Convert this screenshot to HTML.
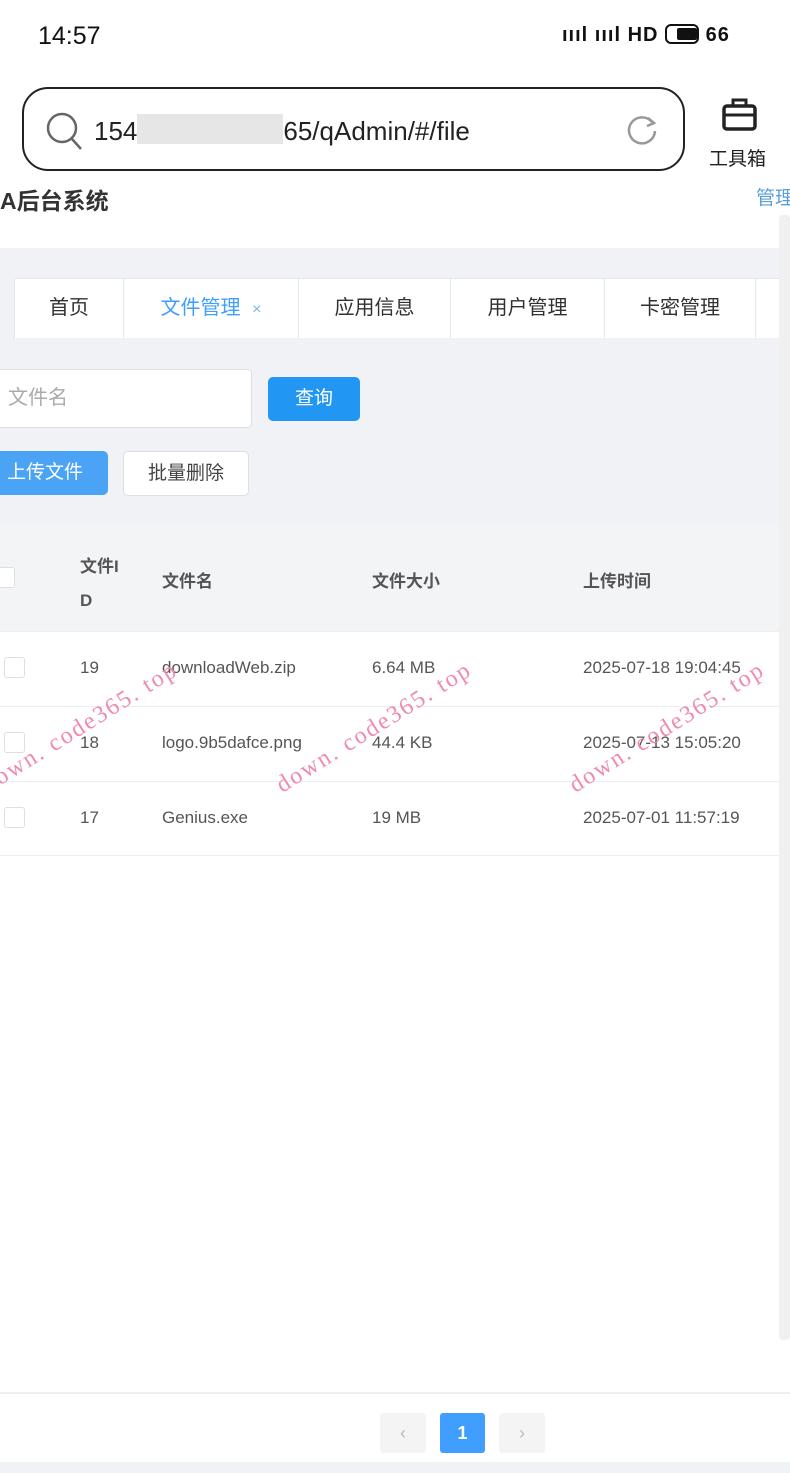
<!DOCTYPE html>
<html><head><meta charset="utf-8"><style>
*{margin:0;padding:0;box-sizing:border-box}
body{width:790px;height:1473px;position:relative;background:#fff;font-family:"Liberation Sans","Noto Sans CJK SC",sans-serif;overflow:hidden;color:#333}
.a{position:absolute}
.tab{position:absolute;top:278px;height:60px;background:#fff;border:1px solid #e4e7ed;border-bottom:none;font-size:20px;line-height:58px;text-align:center;color:#303133}
.th{position:absolute;font-size:17px;font-weight:bold;color:#555}
.td{position:absolute;font-size:17px;color:#555}
.cb{position:absolute;left:4px;width:21px;height:21px;border:1px solid #dcdfe6;border-radius:3px;background:#fff}
.wm{position:absolute;color:#f08ab0;font-family:"Liberation Serif",serif;font-size:24px;transform:rotate(-32deg);transform-origin:left bottom;letter-spacing:2px;white-space:nowrap}
</style></head><body>
<div class="a" style="left:38px;top:22px;font-size:25px;color:#111">14:57</div>
<div class="a" style="left:562px;top:24px;font-size:20px;font-weight:bold;color:#111;letter-spacing:1px;white-space:nowrap">ıııl ıııl HD <span style="display:inline-block;width:34px;height:20px;border:2px solid #111;border-radius:6px;vertical-align:-3px;padding:2px"><span style="display:block;width:20px;height:12px;background:#111;border-radius:2px;margin-left:8px"></span></span> 66</div>
<div class="a" style="left:22px;top:87px;width:663px;height:84px;border:2.5px solid #222;border-radius:26px"></div>
<svg class="a" style="left:44px;top:110px" width="40" height="42"><circle cx="18" cy="18" r="14" fill="none" stroke="#666" stroke-width="2.5"/><line x1="28" y1="29" x2="37" y2="39" stroke="#666" stroke-width="2.5"/></svg>
<div class="a" style="left:94px;top:114px;font-size:26px;color:#222;white-space:nowrap">154<span style="display:inline-block;width:146px;height:30px;background:#e6e6e6;vertical-align:-4px"></span>65/qAdmin/#/file</div>
<svg class="a" style="left:624px;top:112px" width="36" height="36"><path d="M28 10 A13 13 0 1 0 31 19" fill="none" stroke="#999" stroke-width="2.5"/><path d="M24 6 L30 11 L23 14" fill="none" stroke="#999" stroke-width="2.5"/></svg>
<svg class="a" style="left:721px;top:96px" width="38" height="38"><rect x="3" y="10" width="31" height="23" rx="3" fill="none" stroke="#222" stroke-width="3.5"/><path d="M12 10 V4 H25 V10" fill="none" stroke="#222" stroke-width="3"/><line x1="3" y1="19" x2="34" y2="19" stroke="#222" stroke-width="3"/></svg>
<div class="a" style="left:709px;top:144px;font-size:19px;color:#222;white-space:nowrap">工具箱</div>
<div class="a" style="left:0;top:182px;font-size:23px;font-weight:bold;color:#333;white-space:nowrap">A后台系统</div>
<div class="a" style="left:756px;top:183px;font-size:19px;color:#5aa0d8;white-space:nowrap">管理</div>
<div class="a" style="left:0;top:248px;width:790px;height:277px;background:#f0f2f5"></div>
<div class="tab" style="left:14px;width:110px">首页</div>
<div class="tab" style="left:123px;width:176px;color:#409eff">文件管理 <span style="font-size:16px;color:#7ab4ec;margin-left:6px">×</span></div>
<div class="tab" style="left:298px;width:153px">应用信息</div>
<div class="tab" style="left:450px;width:155px">用户管理</div>
<div class="tab" style="left:604px;width:152px">卡密管理</div>
<div class="tab" style="left:755px;width:60px"></div>
<div class="a" style="left:-5px;top:369px;width:257px;height:59px;background:#fff;border:1px solid #dcdfe6;border-radius:4px;font-size:20px;color:#aaa;line-height:57px;padding-left:12px">文件名</div>
<div class="a" style="left:268px;top:377px;width:92px;height:44px;background:#2196f3;border-radius:5px;color:#fff;font-size:19px;text-align:center;line-height:44px">查询</div>
<div class="a" style="left:-5px;top:451px;width:113px;height:44px;background:#4aa3f5;border-radius:5px;color:#fff;font-size:19px;line-height:44px;padding-left:12px">上传文件</div>
<div class="a" style="left:123px;top:451px;width:126px;height:45px;background:#fff;border:1px solid #dcdfe6;border-radius:5px;font-size:19px;text-align:center;line-height:43px;color:#444">批量删除</div>
<div class="a" style="left:0;top:525px;width:790px;height:107px;background:#f3f4f6;border-bottom:1px solid #ebeef5"></div>
<div class="cb" style="left:-6px;top:567px"></div>
<div class="th" style="left:80px;top:550px;line-height:34px">文件I<br>D</div>
<div class="th" style="left:162px;top:567px">文件名</div>
<div class="th" style="left:372px;top:567px">文件大小</div>
<div class="th" style="left:583px;top:567px">上传时间</div>
<div class="a" style="left:0;top:706px;width:780px;height:1px;background:#ebeef5"></div>
<div class="a" style="left:0;top:781px;width:780px;height:1px;background:#ebeef5"></div>
<div class="a" style="left:0;top:855px;width:780px;height:1px;background:#ebeef5"></div>
<div class="cb" style="top:657px"></div><div class="cb" style="top:732px"></div><div class="cb" style="top:807px"></div>
<div class="td" style="left:80px;top:658px">19</div><div class="td" style="left:162px;top:658px">downloadWeb.zip</div><div class="td" style="left:372px;top:658px">6.64 MB</div><div class="td" style="left:583px;top:658px">2025-07-18 19:04:45</div>
<div class="td" style="left:80px;top:733px">18</div><div class="td" style="left:162px;top:733px">logo.9b5dafce.png</div><div class="td" style="left:372px;top:733px">44.4 KB</div><div class="td" style="left:583px;top:733px">2025-07-13 15:05:20</div>
<div class="td" style="left:80px;top:808px">17</div><div class="td" style="left:162px;top:808px">Genius.exe</div><div class="td" style="left:372px;top:808px">19 MB</div><div class="td" style="left:583px;top:808px">2025-07-01 11:57:19</div>
<div class="wm" style="left:-8px;top:772px">down. code365. top</div>
<div class="wm" style="left:286px;top:772px">down. code365. top</div>
<div class="wm" style="left:579px;top:772px">down. code365. top</div>
<div class="a" style="left:779px;top:215px;width:11px;height:1125px;background:#f0f0f0;border-radius:4px"></div>
<div class="a" style="left:0;top:1392px;width:790px;height:2px;background:#eceef1"></div>
<div class="a" style="left:380px;top:1413px;width:46px;height:40px;background:#f4f4f5;border-radius:3px;color:#bbb;text-align:center;line-height:40px;font-size:18px">‹</div>
<div class="a" style="left:440px;top:1413px;width:45px;height:40px;background:#409eff;border-radius:3px;color:#fff;text-align:center;line-height:40px;font-size:18px;font-weight:bold">1</div>
<div class="a" style="left:499px;top:1413px;width:46px;height:40px;background:#f4f4f5;border-radius:3px;color:#bbb;text-align:center;line-height:40px;font-size:18px">›</div>
<div class="a" style="left:0;top:1462px;width:790px;height:11px;background:#f0f2f5"></div>
</body></html>
